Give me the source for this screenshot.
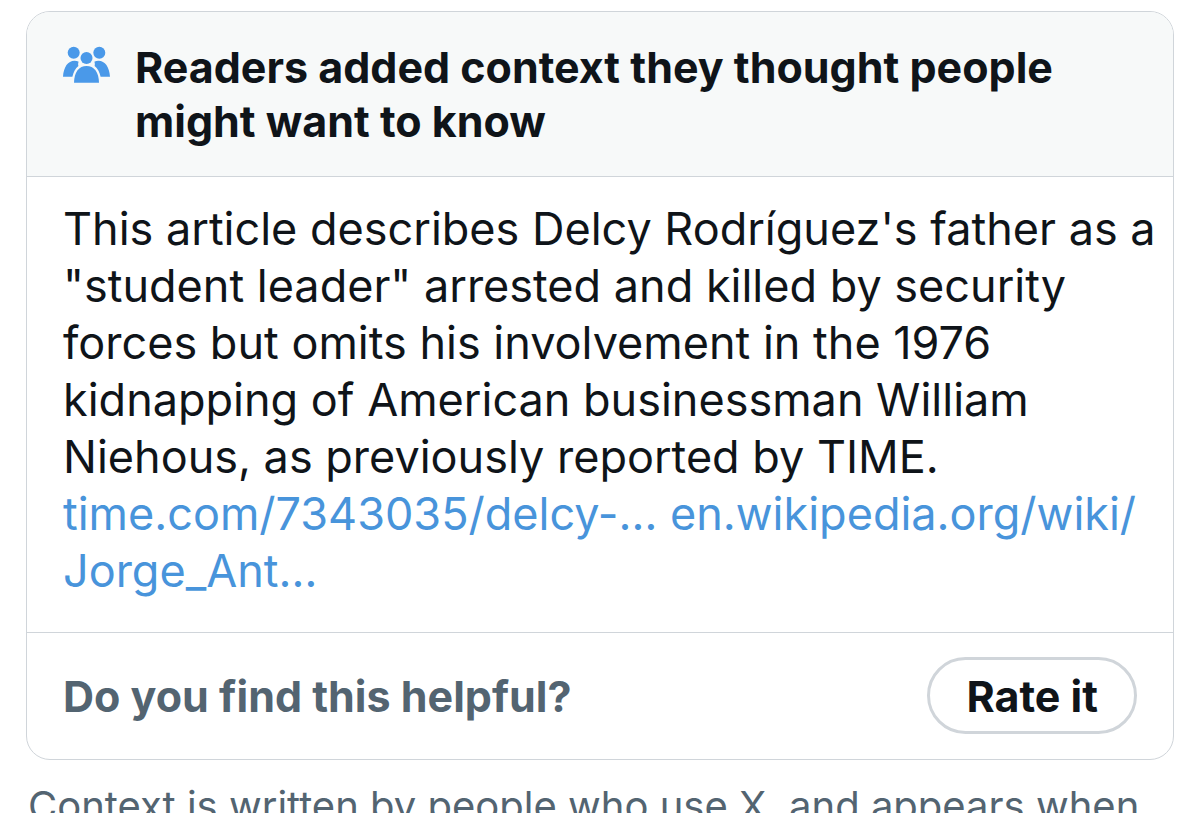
<main>
  <article class="card">
    <header>
      <svg class="people" viewBox="0 0 48 40" aria-hidden="true">
        <g fill="#4a99e9">
          <circle cx="10.7" cy="7.7" r="6" />
          <circle cx="36.3" cy="7.7" r="6" />
          <circle cx="23.5" cy="13" r="6" />
          <path d="M0 31.7C.6 22 5 15.700 11.500 15.700c1.600 0 3 .4 4.200 1.100-.8 1.500-.6 2.800-.3 4.200-3 2.400-5 6-6 10.700z" />
          <path d="M47 31.700C46.400 22 42 15.700 35.500 15.700c-1.600 0-3 .4-4.200 1.100.8 1.500.6 2.800.3 4.200 3 2.400 5 6 6 10.700z" />
          <path d="M11 37.700C11.200 27 16 21 23.500 21S35.800 27 36 37.700z" />
        </g>
      </svg>
      <h1>Readers added context they thought people might want to know</h1>
    </header>
    <p class="note">
      This article describes Delcy Rodríguez's father as a "student leader" arrested and killed by security forces but omits his involvement in the 1976 kidnapping of American businessman William Niehous, as previously reported by TIME.<br />
      <a href="#time">time.com/7343035/delcy-…</a> <a href="#wiki">en.wikipedia.org/wiki/<wbr />Jorge_Ant…</a>
    </p>
    <footer>
      <span>Do you find this helpful?</span>
      <button type="button">Rate it</button>
    </footer>
  </article>
  <p class="about">Context is written by people who use X, and appears when</p>
</main>

<style>
  :global(body) { background: #fff; overflow: hidden; }
  main { padding: 11px 26px 0; font-family: Inter, sans-serif; color: #0f1419; }
  .card { border: 1px solid #d0d5da; border-radius: 24px; overflow: hidden; }
  header { display: flex; gap: 24px; padding: 28px 36px; background: #f7f9f9; border-bottom: 1px solid #d0d5da; }
  .people { flex: none; width: 48px; height: 40px; margin-top: 5px; }
  h1 { margin: 0; font-size: 43px; line-height: 54px; font-weight: 700; }
  .note { margin: 0; padding: 23px 16px 33px 36px; font-size: 45px; line-height: 57px; }
  a { color: #4894db; text-decoration: none; }
  footer { display: flex; align-items: center; justify-content: space-between; padding: 24px 36px 25px; border-top: 1px solid #d0d5da; color: #536471; font-size: 43px; font-weight: 700; }
  button { height: 77px; padding: 0 36px; border: 3px solid #d0d5da; border-radius: 40px; background: #fff; color: #0f1419; font: inherit; }
  .about { margin: 0; padding: 21px 0 0 2px; font-size: 40px; line-height: 50px; color: #536471; }
</style>
